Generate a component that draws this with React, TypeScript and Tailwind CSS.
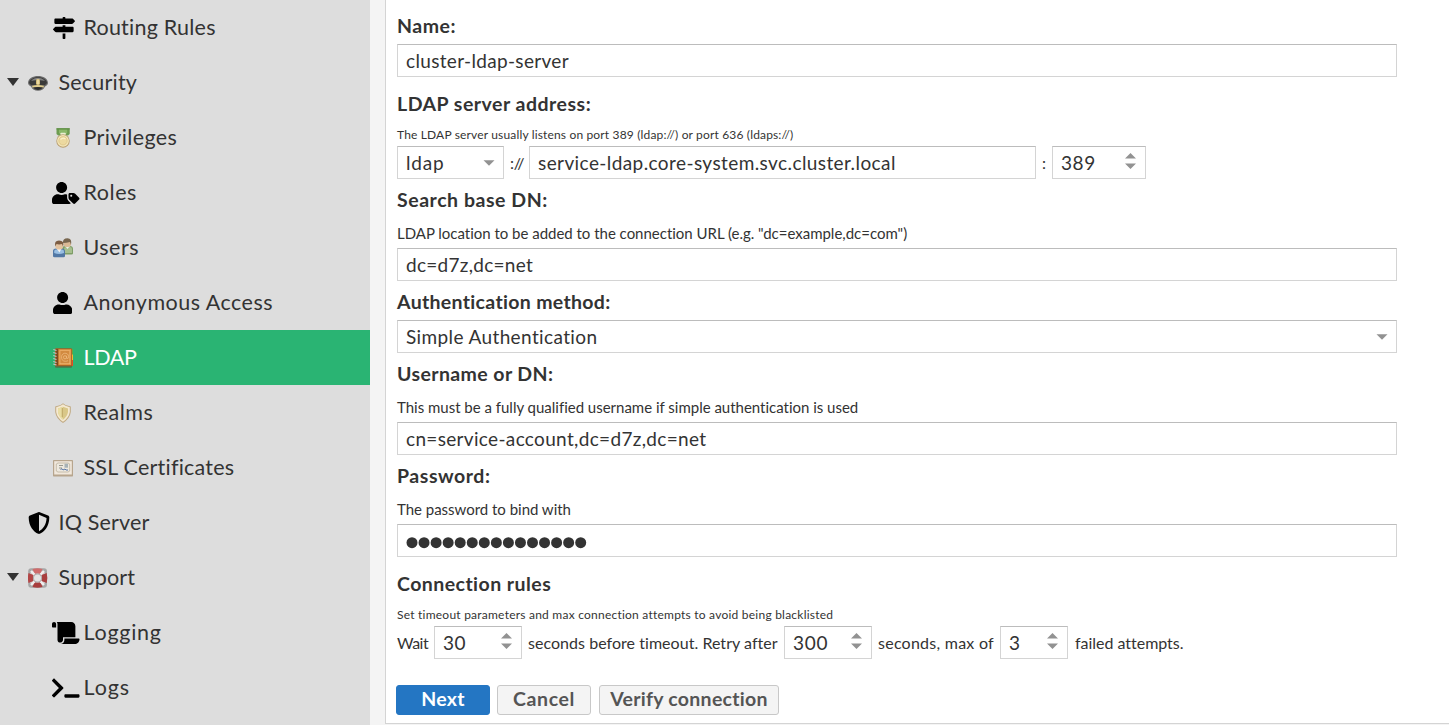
import React from 'react';
import type { ReactNode } from 'react';
import { FaMapSigns, FaUserTag, FaUser, FaShieldAlt, FaScroll, FaTerminal } from 'react-icons/fa';

const CapIcon = () => (
  <svg className="size-5" viewBox="0 0 20 20">
    <path d="M0 10C0 5.500 5 3 10 3S20 5.500 20 10C20 12 18 13 17 13.500Q15 17.800 10 17.800T3 13.500C2 13 0 12 0 10Z" fill="#6b6b6b" />
    <path d="M1 9.800C1.500 6 6 4.200 10 4.200S18.500 6 19 9.800C18.500 11.500 17 12 16 12.500H4C3 12 1.500 11.500 1 9.800Z" fill="#3a3a3a" />
    <path d="M3 8C5 5.500 7.500 5 10 5S15 5.500 17 8C15 7 5 7 3 8Z" fill="#808080" />
    <path d="M4 12.800Q10 11.300 16 12.800L15.300 14.800Q10 13.300 4.700 14.800Z" fill="#e0cc8c" />
    <path d="M5 14.600Q10 13.300 15 14.600Q13 16.900 10 16.900T5 14.600Z" fill="#2c2c2c" />
    <rect x="8" y="5.800" width="4" height="6.300" rx="1.700" fill="#d2bb77" />
    <rect x="9.300" y="6.700" width="1.400" height="4.300" fill="#f4e6b5" />
  </svg>
);

const MedalIcon = () => (
  <svg className="ml-[0.8px] size-5" viewBox="0 0 20 20">
    <path d="M3.500 .3H16.700V6L15 7.500H5.200L3.500 6Z" fill="#6d9c50" />
    <path d="M6 1.300H14.200V5L13 6H7.200L6 5Z" fill="#8ab869" />
    <path d="M3.500 .3H16.700V1.500H3.500Z" fill="#5f8f45" />
    <rect x="7.300" y="4.700" width="5.600" height="2.300" rx="1" fill="#e9efd2" />
    <circle cx="10" cy="13" r="6.700" fill="#b99e70" />
    <circle cx="10" cy="12.800" r="5.900" fill="#f4e7b9" />
    <circle cx="10" cy="12.800" r="4.200" fill="#ecd9a0" stroke="#d9bf80" strokeWidth=".7" />
    <path d="M7.500 11.500Q10 9 12.500 11" stroke="#fbf2cc" strokeWidth="1.200" fill="none" />
  </svg>
);

const UsersIcon = () => (
  <svg className="ml-[0.8px] size-5" viewBox="0 0 20 20">
    <path d="M9 16.500V11Q9 8 12 8H17Q20 8 20 11V15.500Q20 16.500 18.500 16.500Z" fill="#7e9e67" />
    <path d="M11 15V11Q11 9 13 9H17Q19 9 19 11V15Z" fill="#a6bf8e" />
    <path d="M12 8H17L14.500 11Z" fill="#eef0e9" />
    <rect x="10.500" y="1" width="7.500" height="8" rx="3" fill="#dab995" />
    <path d="M10 5Q9.500 .2 14.500 .2Q19.300 .2 18 7L17 4Q13 5 10 5Z" fill="#78664f" />
    <path d="M0 18V13Q0 10.500 3 10.500H9Q12 10.500 12 13.500V18Q12 19.200 10.500 19.200H1.500Q0 19.200 0 18Z" fill="#5278a5" />
    <path d="M1.200 15V13.500Q1.200 11.500 3 11.500H9Q11 11.500 11 13.500V15Q6 17 1.200 15Z" fill="#99bfe3" />
    <path d="M3.500 10.500H8.500L6.500 14.500Z" fill="#f5f3ef" />
    <rect x="2.500" y="3.500" width="7.500" height="8" rx="3" fill="#e3c3a0" />
    <path d="M2.400 8.500Q.8 2.400 6 2.400Q11.700 2.400 10 8.500L9 6Q6 6.800 3.500 6Z" fill="#7c5c42" />
  </svg>
);

const BookIcon = () => (
  <svg className="ml-[0.8px] size-5" viewBox="0 0 20 20">
    <rect x="2" y="17.500" width="17" height="2.200" rx="1" fill="#48764d" />
    <path d="M18 1H20V6.500H18Z" fill="#61a83e" />
    <path d="M18 6.500H20V12H18Z" fill="#f4b52d" />
    <path d="M18 12H20V18H18Z" fill="#e64c22" />
    <rect x="2" y=".3" width="17" height="18" rx="1" fill="#a15d23" />
    <rect x="5.500" y="1.200" width="12.700" height="15.900" fill="#e19849" />
    <rect x="7" y="2.700" width="9.800" height="13" fill="#d28a40" stroke="#f0b878" strokeWidth=".6" />
    <path d="M3 1H5V17.500H3Z" fill="#7e481e" />
    {[2.5, 5.5, 8.5, 11.5, 14.5, 17].map((y) => (
      <path key={y} d={`M.3 ${y - 1}L3.500 ${y}`} stroke="#c4c4c4" strokeWidth="1.200" />
    ))}
    <circle cx="12" cy="9.300" r="1.600" fill="none" stroke="#f0bd82" strokeWidth=".8" />
    <path d="M13.600 7.800V9.800Q14 11.300 15.200 10.300Q16.500 6.300 13 5.300Q9 4.800 8.500 8.800Q8.500 13.300 12.500 13.300Q14 13.300 15 12.600" fill="none" stroke="#f0bd82" strokeWidth=".7" />
  </svg>
);

const RealmIcon = () => (
  <svg className="ml-[0.8px] size-5" viewBox="0 0 20 20">
    <path d="M10 .3L12.500 2L17.800 3.500V9Q17 15.500 10 20Q3 15.500 2.200 9V3.500L7.500 2Z" fill="#c1aa83" />
    <path d="M10 1.300L12.500 2.800L16.800 4.200V9Q16 14.700 10 18.700Q4 14.700 3.200 9V4.200L7.500 2.800Z" fill="#f4e9d1" />
    <path d="M10 3.800L15 5.500V9Q14.300 13.500 10 16.700Q5.700 13.500 5 9V5.500Z" fill="#d9c788" />
    <path d="M10 3.800V16.700Q5.700 13.500 5 9V5.500Z" fill="#e9dda4" />
    <path d="M8.700 5V13.500L10 15V5Z" fill="#c4ae6e" />
  </svg>
);

const CertificateIcon = () => (
  <svg className="ml-[0.8px] size-5" viewBox="0 0 20 20">
    <rect x="0" y="2" width="20" height="16.500" rx=".7" fill="#b7a58d" />
    <rect x="1.200" y="3.200" width="17.600" height="13.300" fill="#f1e8dc" />
    <path d="M4.500 5H15.500Q15.500 6 16.700 6V13Q15.500 13 15.500 14H4.500Q4.500 13 3.300 13V6Q4.500 6 4.500 5Z" fill="#eee9df" stroke="#c2b8a5" strokeWidth=".9" />
    <path d="M6 7.500H10M6 10H9" stroke="#9a998f" />
    <rect x="11.500" y="5.700" width="3.500" height="4" fill="#a8b2b6" />
    <path d="M7.500 11.500L9 10.700L10 12L12 11L13 12H15" stroke="#5875a5" fill="none" />
  </svg>
);

const SupportIcon = () => (
  <svg className="size-5" viewBox="0 0 20 20">
    <rect x=".2" y=".3" width="18.800" height="19.500" rx="3" fill="#a7a7a7" />
    <circle cx="9.600" cy="10" r="9" fill="#cfcfcf" />
    <path d="M4.500 1Q9.500 -.5 14.500 1L12.500 6Q9.500 5 6.500 6Z" fill="#cf6c6c" />
    <path d="M4.500 19Q9.500 20.500 14.500 19L12.500 14Q9.500 15 6.500 14Z" fill="#a83e3e" />
    <path d="M.5 5Q-.7 10 .5 15L5.500 13Q4.500 10 5.500 7Z" fill="#b34646" />
    <path d="M18.700 5Q20 10 18.700 15L13.500 13Q14.500 10 13.500 7Z" fill="#a93e3e" />
    <path d="M3 3L6.500 6.500M16 3L12.500 6.500M3 17L6.500 13.500M16 17L12.500 13.500" stroke="#f1eeee" strokeWidth="2.300" />
    <circle cx="9.500" cy="10" r="4.600" fill="#b0acac" />
    <circle cx="9.500" cy="10" r="3.500" fill="#e4e4e4" />
  </svg>
);

type Item = { label: string; icon: ReactNode; track: string; top?: boolean; open?: boolean; active?: boolean };

const items: Item[] = [
  { label: 'Routing Rules', icon: <FaMapSigns className="ml-[0.5px] h-[22px] w-[22px]" />, track: 'tracking-[0.23px]' },
  { label: 'Security', icon: <CapIcon />, track: 'tracking-[0.2px]', top: true, open: true },
  { label: 'Privileges', icon: <MedalIcon />, track: 'tracking-[0.36px]' },
  { label: 'Roles', icon: <FaUserTag className="h-[22px] w-[27.500px]" />, track: 'tracking-[0.55px]' },
  { label: 'Users', icon: <UsersIcon />, track: 'tracking-[0.5px]' },
  { label: 'Anonymous Access', icon: <FaUser className="ml-[0.5px] h-[22px] w-[19.250px]" />, track: 'tracking-[0.48px]' },
  { label: 'LDAP', icon: <BookIcon />, track: 'tracking-[-0.3px]', active: true },
  { label: 'Realms', icon: <RealmIcon />, track: 'tracking-[0.5px]' },
  { label: 'SSL Certificates', icon: <CertificateIcon />, track: 'tracking-[0.22px]' },
  { label: 'IQ Server', icon: <FaShieldAlt className="h-[22px] w-[22px]" />, track: 'tracking-[0.18px]', top: true },
  { label: 'Support', icon: <SupportIcon />, track: 'tracking-[0.22px]', top: true, open: true },
  { label: 'Logging', icon: <FaScroll className="h-[22px] w-[27.500px]" />, track: 'tracking-[0.75px]' },
  { label: 'Logs', icon: <FaTerminal className="h-[22px] w-[27.500px]" />, track: 'tracking-[0.9px]' },
];

const NavItem = ({ label, icon, track, top, open, active }: Item) => (
  <div className={`flex h-[55px] items-center ${active ? 'bg-[#2ab473] text-white' : 'text-[#333]'}`}>
    <div className={`flex shrink-0 items-center ${top ? 'w-[27.500px]' : 'w-[52.200px]'}`}>
      {open && (
        <svg className="mb-[1px] ml-[7px] h-[8px] w-[12px]" viewBox="0 0 12 8">
          <path d="M0 0H12L6 8Z" fill="#333" />
        </svg>
      )}
    </div>
    <div className={`flex shrink-0 text-black ${top ? 'w-[31px]' : 'w-[31.300px]'}`}>{icon}</div>
    <span className={`whitespace-nowrap pb-0.5 text-[21.500px] leading-[26px] ${track}`}>{label}</span>
  </div>
);

const Label = ({ children, className }: { children: ReactNode; className: string }) => (
  <div className={`h-[22px] whitespace-nowrap text-[19.500px] font-bold leading-[22px] ${className}`}>{children}</div>
);

const Hint = ({ children, className }: { children: ReactNode; className: string }) => (
  <div className={`h-[22px] whitespace-nowrap ${className}`}>{children}</div>
);

const Field = ({ children, className, control }: { children: ReactNode; className: string; control?: ReactNode }) => (
  <div className={`flex h-[33px] shrink-0 items-center justify-between border border-[#d4d4d4] border-t-[#bcbcbc] bg-white pl-2 ${className}`}>
    <span className="whitespace-nowrap pt-px text-[19px] leading-[24px]">{children}</span>
    {control}
  </div>
);

const Arrow = () => (
  <svg className="mr-[8px] h-[6px] w-[12px]" viewBox="0 0 12 6">
    <path d="M.5 .3H11.500L6 5.800Z" fill="#929292" />
  </svg>
);

const Spinner = () => (
  <svg className="mb-1 mr-[9px] h-[16px] w-[11px]" viewBox="0 0 11 16">
    <path d="M0 5.500L5.500 0L11 5.500ZM0 10.500H11L5.500 16Z" fill="#929292" />
  </svg>
);

export default function App() {
  return (
    <div className="flex h-[725px] w-[1449px] overflow-hidden bg-[#f4f4f4] font-['Lato',sans-serif] text-[#333]">
      <nav className="w-[370px] shrink-0 bg-[#ddd]">
        {items.map((item) => (
          <NavItem key={item.label} {...item} />
        ))}
      </nav>
      <main className="ml-[15px] h-[724px] flex-1 border-b border-l border-[#d4d4d4] bg-white pl-[11px]">
        <Label className="mb-[7px] mt-[15px] tracking-[0.5px]">Name:</Label>
        <Field className="w-[1000px] tracking-[0.33px]">cluster-ldap-server</Field>

        <Label className="mt-4 tracking-[0.5px]">LDAP server address:</Label>
        <Hint className="mt-[9px] text-[12px] leading-[22px] tracking-[0.16px]">
          The LDAP server usually listens on port 389 (ldap://) or port 636 (ldaps://)
        </Hint>
        <div className="flex items-center text-[16px]">
          <Field className="w-[107px] tracking-[0.8px]" control={<Arrow />}>ldap</Field>
          <span className="w-[25px] pl-[6px] tracking-[-0.2px]">://</span>
          <Field className="w-[507px] tracking-[0.41px]">service-ldap.core-system.svc.cluster.local</Field>
          <span className="w-4 pl-[6px]">:</span>
          <Field className="w-[94px] tracking-[0.6px]" control={<Spinner />}>389</Field>
        </div>

        <Label className="mt-[10px] tracking-[0.54px]">Search base DN:</Label>
        <Hint className="mb-[3px] mt-3 text-[15px] leading-[20px] tracking-[-0.015px]">
          LDAP location to be added to the connection URL (e.g. "dc=example,dc=com")
        </Hint>
        <Field className="w-[1000px] tracking-[0.28px]">dc=d7z,dc=net</Field>

        <Label className="mb-[7px] mt-[10px] tracking-[0.32px]">Authentication method:</Label>
        <Field className="w-[1000px] tracking-[0.38px]" control={<Arrow />}>Simple Authentication</Field>

        <Label className="mt-[10px] tracking-[0.4px]">Username or DN:</Label>
        <Hint className="mb-[3px] mt-3 text-[15px] leading-[20px] tracking-[-0.01px]">
          This must be a fully qualified username if simple authentication is used
        </Hint>
        <Field className="w-[1000px] tracking-[0.33px]">cn=service-account,dc=d7z,dc=net</Field>

        <Label className="mt-[10px] tracking-[0.55px]">Password:</Label>
        <Hint className="mb-[3px] mt-3 text-[15px] leading-[20px] tracking-[-0.02px]">The password to bind with</Hint>
        <Field className="w-[1000px]">
          <svg className="mt-[3px] h-3 w-[182px]" viewBox="0 0 182 12">
            {Array.from({ length: 15 }, (_, i) => (
              <circle key={i} cx={6 + i * 12.05} cy="5.7" r="5.500" fill="#333" />
            ))}
          </svg>
        </Field>

        <Label className="mt-4 tracking-[0.45px]">Connection rules</Label>
        <Hint className="mt-[9px] text-[12px] leading-[22px] tracking-[0.23px]">
          Set timeout parameters and max connection attempts to avoid being blacklisted
        </Hint>
        <div className="flex items-center whitespace-nowrap text-[16px]">
          <span className="w-[37px] tracking-[-0.5px]">Wait</span>
          <Field className="w-[88px] tracking-[0.6px]" control={<Spinner />}>30</Field>
          <span className="w-[262px] pl-[6px] tracking-[0.04px]">seconds before timeout. Retry after</span>
          <Field className="w-[88px] tracking-[0.7px]" control={<Spinner />}>300</Field>
          <span className="w-[128px] pl-[6px] tracking-[0.25px]">seconds, max of</span>
          <Field className="w-[68px]" control={<Spinner />}>3</Field>
          <span className="pl-[7px] tracking-[-0.02px]">failed attempts.</span>
        </div>

        <div className="-ml-px mt-[26px] flex text-[19.500px] font-bold leading-[26px] text-[#555]">
          <button className="h-[30px] w-[94px] rounded-[3px] border border-[#2476c3] bg-[#2476c3] pb-[2px] tracking-[0.3px] text-white">Next</button>
          <button className="ml-[7px] h-[30px] w-[94px] rounded-[3px] border border-[#c8c8c8] bg-[#f4f4f4] pb-[2px] tracking-[0.6px]">Cancel</button>
          <button className="ml-2 h-[30px] w-[180px] whitespace-nowrap rounded-[3px] border border-[#c8c8c8] bg-[#f4f4f4] pb-[2px] tracking-[0.28px]">Verify connection</button>
        </div>
      </main>
    </div>
  );
}
